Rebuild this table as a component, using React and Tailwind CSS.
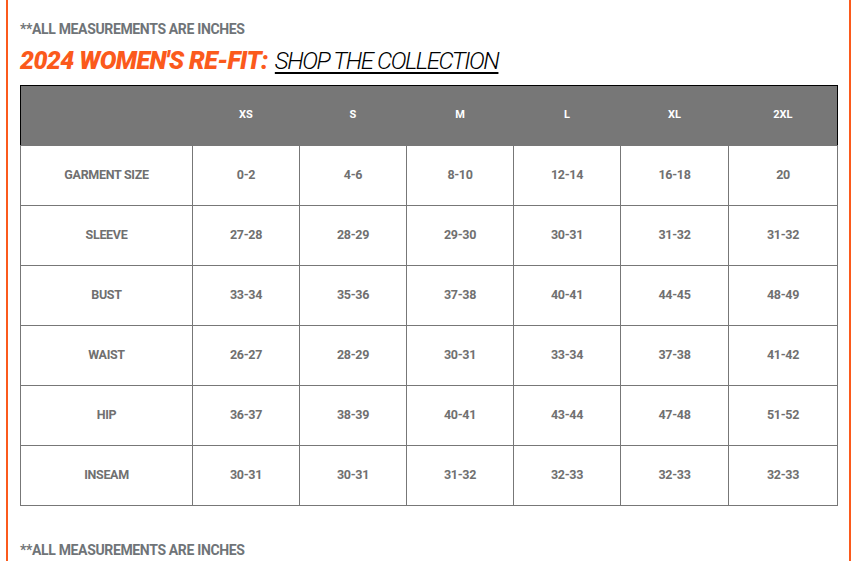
import React from 'react'

const sizes = ['XS', 'S', 'M', 'L', 'XL', '2XL']

const rows = [
  { label: 'GARMENT SIZE', values: ['0-2', '4-6', '8-10', '12-14', '16-18', '20'] },
  { label: 'SLEEVE', values: ['27-28', '28-29', '29-30', '30-31', '31-32', '31-32'] },
  { label: 'BUST', values: ['33-34', '35-36', '37-38', '40-41', '44-45', '48-49'] },
  { label: 'WAIST', values: ['26-27', '28-29', '30-31', '33-34', '37-38', '41-42'] },
  { label: 'HIP', values: ['36-37', '38-39', '40-41', '43-44', '47-48', '51-52'] },
  { label: 'INSEAM', values: ['30-31', '30-31', '31-32', '32-33', '32-33', '32-33'] },
]

const Note = () => (
  <p className="text-[14px] font-bold tracking-tight text-[#6f7478] leading-none">
    **ALL MEASUREMENTS ARE INCHES
  </p>
)

const App = () => {
  return (
    <div
      className="w-[864px] h-[561px] overflow-hidden bg-white"
      style={{ fontFamily: 'Roboto, "Liberation Sans", sans-serif' }}
    >
      <div className="ml-[6px] w-[845px] h-full border-x-2 border-[#fb5a1c] px-3 pt-[22px]">
        <Note />

        {/* Title */}
        <h2 className="mt-[12px] h-[30px] leading-none italic whitespace-nowrap">
          <span className="text-[25px] font-black tracking-tight text-[#fb5a1c]">
            2024 WOMEN'S RE-FIT:
          </span>{' '}
          <span className="ml-[3px] text-[24px] font-light tracking-[-0.06em] text-black underline underline-offset-[3px]">
            SHOP THE COLLECTION
          </span>
        </h2>

        {/* Size chart */}
        <table className="mt-[7px] w-[817px] border-collapse table-fixed">
          <colgroup>
            <col className="w-[172px]" />
            <col className="w-[107px]" />
            <col className="w-[107px]" />
            <col className="w-[107px]" />
            <col className="w-[107px]" />
            <col className="w-[108px]" />
            <col className="w-[109px]" />
          </colgroup>
          <thead>
            <tr className="h-[60px] bg-[#777777] border border-black border-b-0">
              <th />
              {sizes.map((s) => (
                <th key={s} className="text-[11px] font-bold text-white text-center">
                  {s}
                </th>
              ))}
            </tr>
          </thead>
          <tbody>
            {rows.map((row) => (
              <tr key={row.label} className="h-[60px]">
                <td className="border border-[#777777] text-center text-[12.5px] font-bold tracking-tight text-[#707070]">
                  {row.label}
                </td>
                {row.values.map((v, i) => (
                  <td
                    key={i}
                    className="border border-[#777777] text-center text-[12.5px] font-bold tracking-tight text-[#707070]"
                  >
                    {v}
                  </td>
                ))}
              </tr>
            ))}
          </tbody>
        </table>

        <div className="mt-[37px]">
          <Note />
        </div>
      </div>
    </div>
  )
}

export default App
